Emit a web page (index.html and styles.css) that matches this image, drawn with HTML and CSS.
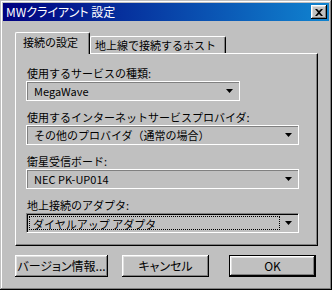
FILE: index.html
```html
<!DOCTYPE html>
<html lang="ja">
<head>
  <meta charset="UTF-8">
  <title>MWクライアント 設定</title>
  <link rel="stylesheet" href="styles.css">
</head>
<body>
  <div class="window">
    <div class="titlebar">
      <span class="title">MWクライアント 設定</span>
      <span class="close-btn">
        <svg width="8" height="7" viewBox="0 0 8 7"><path d="M0 0h2l2 2 2-2h2L5 3.5 8 7H6L4 5 2 7H0l3-3.5z" fill="#000"/></svg>
      </span>
    </div>

    <div class="content">
      <!-- Вкладки -->
      <div class="tabs">
        <div class="tab tab-active">接続の設定</div>
        <div class="tab">地上線で接続するホスト</div>
      </div>

      <div class="panel">
        <div class="field">
          <div class="field-label">使用するサービスの種類:</div>
          <div class="combo combo-short"><span>MegaWave</span><i class="arrow"></i></div>
        </div>
        <div class="field">
          <div class="field-label">使用するインターネットサービスプロバイダ:</div>
          <div class="combo"><span>その他のプロバイダ（通常の場合）</span><i class="arrow"></i></div>
        </div>
        <div class="field">
          <div class="field-label">衛星受信ボード:</div>
          <div class="combo"><span>NEC PK-UP014</span><i class="arrow"></i></div>
        </div>
        <div class="field">
          <div class="field-label">地上接続のアダプタ:</div>
          <div class="combo combo-focus">
            <span class="focus-rect">ダイヤルアップ アダプタ</span><i class="arrow"></i>
          </div>
        </div>
      </div>

      <!-- Кнопки -->
      <div class="buttons">
        <div class="btn btn-version">バージョン情報...</div>
        <div class="btn btn-cancel">キャンセル</div>
        <div class="btn btn-ok">OK</div>
      </div>
    </div>
  </div>
</body>
</html>
```

FILE: styles.css
```css
/* Общие стили */
* {
    box-sizing: border-box;
}

body {
    margin: 0;
    background: #c0c0c0;
    font-family: "Noto Sans CJK JP", "Liberation Sans", sans-serif;
    font-size: 11px;
    color: #000;
}

.window {
    width: 332px;
    height: 290px;
    padding: 3px;
    background: #c0c0c0;
    box-shadow: inset -1px -1px #000, inset 1px 1px #c0c0c0,
                inset -2px -2px #808080, inset 2px 2px #fff;
}

/* Заголовок */
.titlebar {
    height: 18px;
    display: flex;
    align-items: center;
    justify-content: space-between;
    padding: 0 2px 0 3px;
    background: linear-gradient(to right, #000080, #1084d0);
    color: #fff;
}

.title {
    font-size: 12px;
    font-feature-settings: "palt";
    line-height: 14px;
}

.close-btn {
    width: 16px;
    height: 14px;
    display: flex;
    align-items: center;
    justify-content: center;
    background: #c0c0c0;
    box-shadow: inset -1px -1px #000, inset 1px 1px #fff,
                inset -2px -2px #808080, inset 2px 2px #dfdfdf;
}

.content {
    padding: 11px 11px 0 12px;
}

/* Вкладки */
.tabs {
    display: flex;
    align-items: flex-end;
    height: 21px;
    position: relative;
    z-index: 1;
}

.tab {
    height: 17px;
    padding: 0 9px 0 4px;
    line-height: 16px;
    background: #c0c0c0;
    border-top: 1px solid #fff;
    border-left: 1px solid #fff;
    border-right: 1px solid #000;
    border-radius: 2px 2px 0 0;
    box-shadow: inset -1px 0 #808080;
}

.tab-active {
    height: 22px;
    margin-bottom: -1px;
    padding: 0 11px 0 7px;
    line-height: 19px;
}

/* Панель */
.panel {
    height: 193px;
    padding: 12px 18px 0 10px;
    border-top: 1px solid #fff;
    border-left: 1px solid #fff;
    border-right: 1px solid #000;
    border-bottom: 1px solid #000;
    box-shadow: inset -1px -1px #808080;
}

.field + .field {
    margin-top: 9px;
}

.field-label {
    height: 14px;
    line-height: 14px;
    padding-left: 1px;
    margin-bottom: 1px;
    white-space: nowrap;
}

/* Выпадающие списки */
.combo {
    height: 20px;
    display: flex;
    align-items: center;
    justify-content: space-between;
    padding: 0 6px 0 7px;
    border: 1px solid #fff;
    box-shadow: inset 1px 1px #808080;
}

.combo-short {
    width: 214px;
}

.combo span {
    line-height: 14px;
    white-space: nowrap;
}

.arrow {
    width: 7px;
    height: 4px;
    background: #000;
    clip-path: polygon(0 0, 100% 0, 50% 100%);
}

.combo-focus {
    padding: 2px 6px 2px 2px;
    border-top: 1px solid #808080;
    border-left: 1px solid #808080;
    box-shadow: inset 1px 1px #000;
}

.focus-rect {
    flex: 1;
    height: 14px;
    margin-right: 5px;
    padding-left: 3px;
    border: 1px dotted #000;
    line-height: 12px;
}

/* Кнопки */
.buttons {
    display: flex;
    margin-top: 9px;
}

.btn {
    width: 87px;
    height: 22px;
    display: flex;
    align-items: center;
    justify-content: center;
    line-height: 14px;
    font-size: 12px;
    font-feature-settings: "palt";
    background: #c0c0c0;
    box-shadow: inset -1px -1px #000, inset 1px 1px #fff,
                inset -2px -2px #808080, inset 2px 2px #dfdfdf;
}

.btn-version {
    width: 93px;
}

.btn-cancel {
    margin-left: 14px;
}

.btn-ok {
    margin-left: 20px;
    border: 1px solid #000;
}
```
